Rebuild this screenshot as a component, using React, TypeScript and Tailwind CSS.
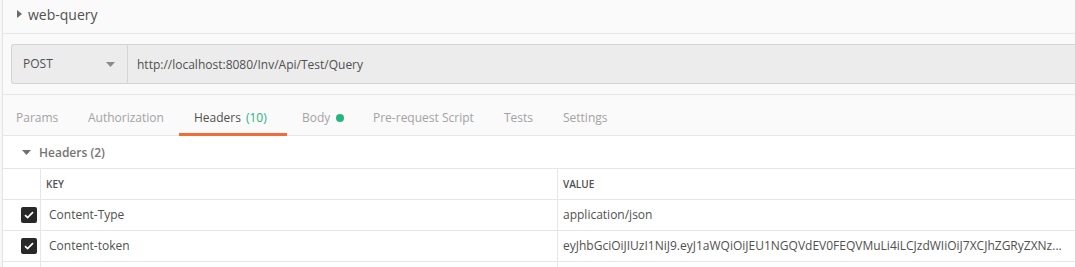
const tabs = [
  { label: 'Params', w: 'w-[70px] pl-[13px]' },
  { label: 'Authorization', w: 'w-[106px] pl-[15px]' },
  { label: 'Headers', count: '(10)', active: true, w: 'w-[108px] pl-[15px]' },
  { label: 'Body', dot: true, w: 'w-[71px] pl-[15px]' },
  { label: 'Pre-request Script', w: 'w-[131px] pl-[15px]' },
  { label: 'Tests', w: 'w-[59px] pl-[15px]' },
  { label: 'Settings', w: 'w-[90px] pl-[15px]' },
];

const rows = [
  { key: 'Content-Type', value: 'application/json' },
  {
    key: 'Content-token',
    value: 'eyJhbGciOiJIUzI1NiJ9.eyJ1aWQiOiJEU1NGQVdEV0FEQVMuLi4iLCJzdWIiOiJ7XCJhZGRyZXNz...',
  },
];

function Caret({ dir = 'down', className = '' }: { dir?: 'down' | 'right'; className?: string }) {
  return dir === 'down' ? (
    <svg width="9" height="5" viewBox="0 0 9 5" className={className}>
      <path d="M0 0h9L4.5 5z" fill="currentColor" />
    </svg>
  ) : (
    <svg width="5" height="8" viewBox="0 0 5 8" className={className}>
      <path d="M0 0l5 4-5 4z" fill="currentColor" />
    </svg>
  );
}

function Checkbox() {
  return (
    <div className="w-4 h-4 rounded-[2px] bg-[#282828] flex items-center justify-center">
      <svg width="10" height="8" viewBox="0 0 10 8">
        <path d="M1 4.2l2.6 2.4L9 1.2" stroke="white" strokeWidth="1.8" fill="none" />
      </svg>
    </div>
  );
}

export default function App() {
  return (
    <div
      className="w-[1075px] h-[267px] overflow-hidden bg-[#f7f7f7] pl-[2px]"
      style={{ fontFamily: '"Open Sans", "Noto Sans", sans-serif' }}
    >
      <div className="h-full border-l border-[#e3e3e3] bg-[#fafafa] flex flex-col">
        {/* request name */}
        <div className="h-[34px] shrink-0 flex items-center pl-[14px] pb-[5px] border-b border-[#e6e6e6]">
          <Caret dir="right" className="text-[#6b6b6b]" />
          <span className="ml-[6px] text-[14px] text-[#505050]">web-query</span>
        </div>

        {/* url bar */}
        <div className="pt-[10px] pl-[8px] shrink-0">
          <div className="h-[40px] flex bg-[#ececec] border border-r-0 border-[#d4d4d4] rounded-l-[3px]">
            <div className="w-[116px] flex items-center justify-between pl-[11px] pr-[12px] border-r border-[#d4d4d4]">
              <span className="text-[12px] text-[#505050]">POST</span>
              <Caret className="text-[#8a8a8a]" />
            </div>
            <div className="flex items-center pl-[9px] pt-[1px] text-[12px] text-[#505050]">
              http://localhost:8080/Inv/Api/Test/Query
            </div>
          </div>
        </div>

        {/* tabs */}
        <div className="mt-[10px] h-[42px] shrink-0 flex border-y border-[#e6e6e6]">
          {tabs.map((t) => (
            <div
              key={t.label}
              className={
                'relative flex items-center pt-[5px] shrink-0 text-[12px] ' +
                t.w +
                ' ' +
                (t.active ? 'text-[#505050]' : 'text-[#a3a3a3]')
              }
            >
              <span>{t.label}</span>
              {t.count && <span className="ml-[5px] text-[#26b47f]">{t.count}</span>}
              {t.dot && <span className="ml-[6px] w-[8px] h-[8px] rounded-full bg-[#26b47f]" />}
              {t.active && (
                <span className="absolute left-0 right-0 bottom-[-1px] h-[3px] bg-[#f26b3a]" />
              )}
            </div>
          ))}
        </div>

        {/* headers section */}
        <div className="flex-1 bg-white">
          <div className="h-[32px] flex items-center pl-[19px] pt-[1px]">
            <Caret className="text-[#707070]" />
            <span className="ml-[8px] text-[12px] font-semibold text-[#757575]">Headers (2)</span>
          </div>
          <div className="border-t border-[#e6e6e6]">
            <div className="grid grid-cols-[38px_517px_1fr] h-[31px] border-b border-[#e6e6e6]">
              <div className="border-r border-[#e6e6e6]" />
              <div className="flex items-center pl-[5px] border-r border-[#e6e6e6] text-[10px] font-semibold text-[#505050]">
                KEY
              </div>
              <div className="flex items-center pl-[5px] text-[10px] font-semibold text-[#505050]">
                VALUE
              </div>
            </div>
            {rows.map((r) => (
              <div
                key={r.key}
                className="grid grid-cols-[38px_517px_1fr] h-[31px] border-b border-[#e6e6e6]"
              >
                <div className="flex items-center justify-end pr-[3px] border-r border-[#e6e6e6]">
                  <Checkbox />
                </div>
                <div className="flex items-center pl-[8px] border-r border-[#e6e6e6] text-[12px] text-[#505050]">
                  {r.key}
                </div>
                <div className="flex items-center pl-[5px] text-[12px] text-[#505050] whitespace-nowrap overflow-hidden">
                  {r.value}
                </div>
              </div>
            ))}
            <div className="grid grid-cols-[38px_517px_1fr] h-[31px]">
              <div className="border-r border-[#e6e6e6]" />
              <div className="border-r border-[#e6e6e6]" />
              <div />
            </div>
          </div>
        </div>
      </div>
    </div>
  );
}
